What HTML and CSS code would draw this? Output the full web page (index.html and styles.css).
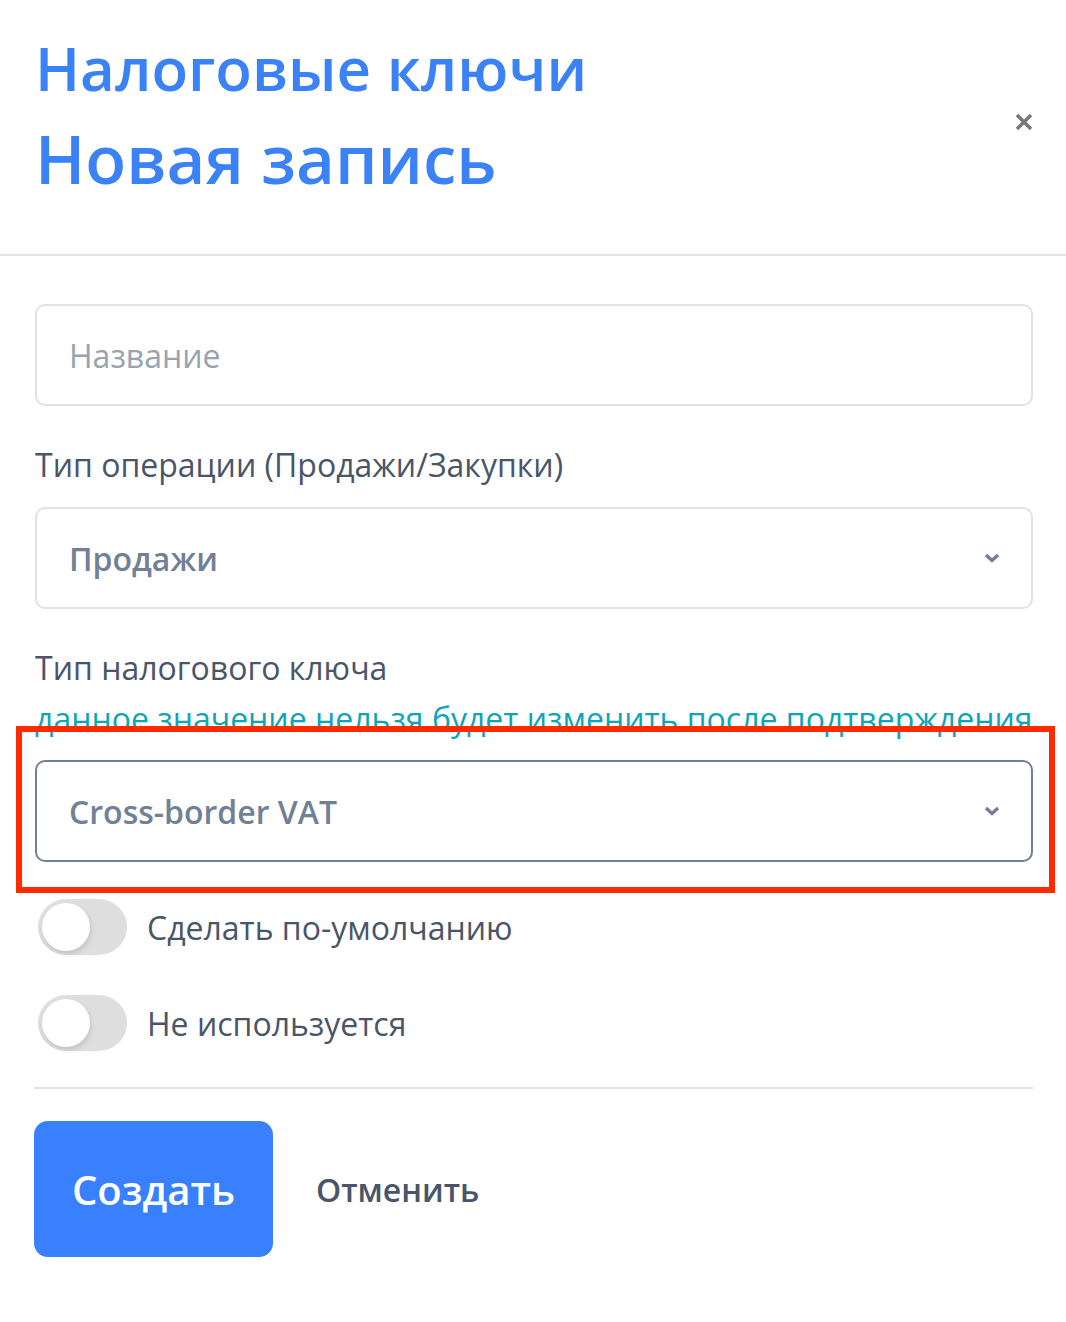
FILE: index.html
```html
<!DOCTYPE html>
<html lang="ru">
<head>
    <meta charset="UTF-8">
    <meta name="viewport" content="width=device-width, initial-scale=1.0">
    <title>Налоговые ключи — Новая запись</title>
    <link rel="stylesheet" href="styles.css">
</head>
<body>
    <div class="modal">
        <header class="modal-header">
            <div class="modal-title">
                <h2 class="title-section">Налоговые ключи</h2>
                <h1 class="title-main">Новая запись</h1>
            </div>
            <button class="close-btn" type="button" aria-label="Закрыть">
                <svg width="18" height="18" viewBox="0 0 18 18">
                    <path d="M2 2 L16 16 M16 2 L2 16" stroke="#7a7a7a" stroke-width="3.6" fill="none"/>
                </svg>
            </button>
        </header>

        <form class="modal-body">
            <input class="field" type="text" placeholder="Название">

            <label class="field-label">Тип операции (Продажи/Закупки)</label>
            <div class="select">
                <span class="select-value">Продажи</span>
                <svg class="chevron" width="16" height="10" viewBox="0 0 16 10">
                    <path d="M2 2 L8 7.5 L14 2" stroke="#718096" stroke-width="3.4" fill="none"/>
                </svg>
            </div>

            <label class="field-label">Тип налогового ключа</label>
            <p class="hint">данное значение нельзя будет изменить после подтверждения</p>
            <div class="select select-active">
                <span class="select-value">Cross-border VAT</span>
                <svg class="chevron" width="16" height="10" viewBox="0 0 16 10">
                    <path d="M2 2 L8 7.5 L14 2" stroke="#718096" stroke-width="3.4" fill="none"/>
                </svg>
                <div class="highlight"></div>
            </div>

            <div class="toggles">
                <label class="toggle-row">
                    <span class="toggle"><span class="knob"></span></span>
                    <span class="toggle-text">Сделать по-умолчанию</span>
                </label>
                <label class="toggle-row">
                    <span class="toggle"><span class="knob"></span></span>
                    <span class="toggle-text">Не используется</span>
                </label>
            </div>

            <div class="actions">
                <button class="btn-primary" type="button">Создать</button>
                <button class="btn-link" type="button">Отменить</button>
            </div>
        </form>
    </div>
</body>
</html>
```

FILE: styles.css
```css
body {
    margin: 0;
    background-color: #ffffff;
    font-family: 'Open Sans', 'Noto Sans', sans-serif;
    color: #4a5568;
}

.modal-header {
    display: flex;
    justify-content: space-between;
    align-items: center;
    padding: 24px 33px 49px 35px;
    border-bottom: 2px solid #e2e2e2;
}

.modal-title {
    color: #3b82f6;
    font-weight: 600;
}

.title-section {
    margin: 0;
    font-size: 60px;
    font-weight: 600;
    line-height: 88px;
}

.title-main {
    margin: 0;
    font-size: 67px;
    font-weight: 600;
    line-height: 93px;
}

.close-btn {
    background: none;
    border: none;
    padding: 0;
    margin-top: 14px;
    cursor: pointer;
    line-height: 0;
}

.modal-body {
    padding: 48px 33px 0 35px;
}

.field {
    display: block;
    width: 100%;
    height: 102px;
    box-sizing: border-box;
    border: 2px solid #e2e2e2;
    border-radius: 10px;
    padding: 0 32px;
    font-family: inherit;
    font-size: 32px;
    color: #4a5568;
}

.field::placeholder {
    color: #97a3b1;
}

.field-label {
    display: block;
    margin-top: 39px;
    font-size: 32px;
    line-height: 40px;
    color: #4a5568;
}

.hint {
    margin: 11px 0 0;
    font-size: 32px;
    line-height: 40px;
    color: #0ea5b7;
}

.select {
    position: relative;
    display: flex;
    justify-content: space-between;
    align-items: center;
    height: 102px;
    box-sizing: border-box;
    margin-top: 22px;
    padding: 0 31px 0 32px;
    border: 2px solid #e2e2e2;
    border-radius: 10px;
}

.select-active {
    margin-top: 21px;
    border-color: #718096;
}

.select-value {
    font-size: 32px;
    font-weight: 600;
    color: #718096;
}

.highlight {
    position: absolute;
    left: -21px;
    right: -24px;
    top: -36px;
    bottom: -33px;
    border: 6px solid #ff2a00;
}

.toggles {
    display: flex;
    flex-direction: column;
    gap: 40px;
    margin-top: 37px;
}

.toggle-row {
    display: flex;
    align-items: center;
    gap: 20px;
    padding-left: 3px;
}

.toggle {
    position: relative;
    width: 89px;
    height: 56px;
    border-radius: 28px;
    background-color: #dedede;
}

.knob {
    position: absolute;
    left: 4px;
    top: 4px;
    width: 48px;
    height: 48px;
    border-radius: 50%;
    background-color: #ffffff;
    box-shadow: 1px 3px 5px rgba(0, 0, 0, 0.12);
}

.toggle-text {
    font-size: 32px;
    color: #4a5568;
}

.actions {
    display: flex;
    align-items: center;
    gap: 43px;
    margin-top: 36px;
    padding-top: 32px;
    border-top: 2px solid #e2e2e2;
    margin-left: -1px;
}

.btn-primary {
    width: 239px;
    height: 136px;
    border: none;
    border-radius: 14px;
    background-color: #3880ff;
    color: #ffffff;
    font-family: inherit;
    font-size: 40px;
    font-weight: 600;
    cursor: pointer;
}

.btn-link {
    background: none;
    border: none;
    padding: 0;
    font-family: inherit;
    font-size: 32px;
    font-weight: 600;
    color: #4a5568;
    cursor: pointer;
}
```
